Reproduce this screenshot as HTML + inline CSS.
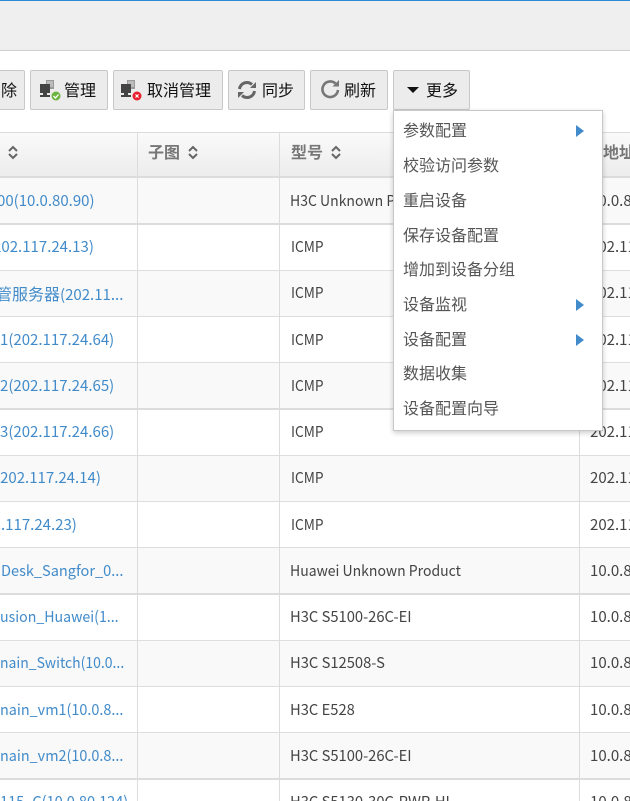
<!DOCTYPE html>
<html lang="zh"><head><meta charset="utf-8"><title>设备</title>
<style>
html,body{margin:0;padding:0;width:630px;height:801px;overflow:hidden;background:#fff}
body{font-family:"WenQuanYi Zen Hei","Noto Sans CJK SC",sans-serif}
#w{position:relative;width:630px;height:801px;overflow:hidden}
.a{position:absolute}
.btn{position:absolute;top:70px;height:40px;box-sizing:border-box;background:#ececec;border:1px solid #c8c8c8;border-radius:2px;color:#111;font:16px/37px "Noto Sans CJK SC",sans-serif;white-space:nowrap}
.btn span{position:absolute;top:0}
.row{position:absolute;left:0;width:630px;overflow:hidden}
.t{position:absolute;font-size:15px;line-height:20px;white-space:nowrap;color:#444;margin-top:1px;transform-origin:0 0}
.l{color:#428bca}
.v{position:absolute;width:1px;background:#dcdcdc}
.th{position:absolute;font:bold 16px/22px "Noto Sans CJK SC",sans-serif;color:#777;white-space:nowrap}
.m{position:absolute;left:403px;font:16px/20px "Noto Sans CJK SC",sans-serif;color:#555;white-space:nowrap;margin-top:-2px}
.ar{position:absolute;left:576px;width:0;height:0;border-left:8px solid #428bca;border-top:6px solid transparent;border-bottom:6px solid transparent}
.i{transform:scaleX(.914)}
.h{transform:scaleX(.982)}
</style></head><body><div id="w">
<div class="a" style="left:0;top:0;width:630px;height:1px;background:#2f8ad6"></div>
<div class="a" style="left:0;top:1px;width:630px;height:49px;background:#efefef;border-bottom:1px solid #cfcfcf"></div>

<div class="btn" style="left:-20px;width:45px"><span style="left:20px">除</span></div>
<div class="btn" style="left:30px;width:78px">
<svg class="a" style="left:9px;top:8px" width="22" height="22" viewBox="0 0 22 22"><path d="M6 1h8v9H6z" fill="#999"/><path d="M7 2h6v6H7z" fill="#bbb"/><path d="M0 5h10v9H0z" fill="#444"/><path d="M3 14h4v2h3v2H0v-2h3z" fill="#444"/><circle cx="16" cy="17" r="4.500" fill="#6db33f"/><path d="M13.500 17l2 2 3-3.500" stroke="#fff" stroke-width="1.300" fill="none"/></svg>
<span style="left:33px">管理</span></div>
<div class="btn" style="left:113px;width:110px">
<svg class="a" style="left:7px;top:8px" width="22" height="22" viewBox="0 0 22 22"><path d="M6 1h8v9H6z" fill="#999"/><path d="M7 2h6v6H7z" fill="#bbb"/><path d="M0 5h10v9H0z" fill="#444"/><path d="M3 14h4v2h3v2H0v-2h3z" fill="#444"/><circle cx="16" cy="17" r="4.500" fill="#e8202e"/><path d="M14.500 15.500l3 3m0-3l-3 3" stroke="#fff" stroke-width="1.200"/></svg>
<span style="left:33px">取消管理</span></div>
<div class="btn" style="left:228px;width:77px">
<svg class="a" style="left:8px;top:9px" width="20" height="20" viewBox="0 0 20 20"><path d="M2.500 9A7.500 7.500 0 0 1 15 4.500" fill="none" stroke="#666" stroke-width="3"/><path d="M17.500 11A7.500 7.500 0 0 1 5 15.500" fill="none" stroke="#666" stroke-width="3"/><path d="M13 8h6V2z" fill="#666"/><path d="M7 12H1v6z" fill="#666"/></svg>
<span style="left:33px">同步</span></div>
<div class="btn" style="left:310px;width:78px">
<svg class="a" style="left:9px;top:8px" width="20" height="20" viewBox="0 0 20 20"><path d="M15.500 4.500A7.800 7.800 0 1 0 18 11" fill="none" stroke="#777" stroke-width="2.600"/><path d="M12.500 7.500H19V1z" fill="#777"/></svg>
<span style="left:33px">刷新</span></div>
<div class="btn" style="left:393px;width:77px">
<div class="a" style="left:13px;top:16px;width:0;height:0;border-top:6px solid #111;border-left:6px solid transparent;border-right:6px solid transparent"></div>
<span style="left:32px">更多</span></div>

<!-- header -->
<div class="a" style="left:0;top:132px;width:630px;height:45px;background:linear-gradient(#fafafa,#ececec);border-top:1px solid #dcdcdc;box-sizing:border-box"></div>
<div class="th" style="left:148px;top:140px">子图</div>
<div class="th" style="left:291px;top:140px">型号</div>
<div class="th" style="left:603px;top:140px">地址</div>
<svg class="a" style="left:7px;top:145px" width="12" height="15" viewBox="0 0 12 15"><path d="M2 6l4-4 4 4M2 9l4 4 4-4" fill="none" stroke="#666" stroke-width="2"/></svg>
<svg class="a" style="left:187px;top:145px" width="12" height="15" viewBox="0 0 12 15"><path d="M2 6l4-4 4 4M2 9l4 4 4-4" fill="none" stroke="#666" stroke-width="2"/></svg>
<svg class="a" style="left:330px;top:145px" width="12" height="15" viewBox="0 0 12 15"><path d="M2 6l4-4 4 4M2 9l4 4 4-4" fill="none" stroke="#666" stroke-width="2"/></svg>

<!-- row backgrounds -->
<div class="a" style="left:0;top:176px;width:630px;height:2px;background:#dcdcdc"></div>
<div class="row" style="top:178px;height:45px;background:#f9f9f9;border-bottom:2px solid #dcdcdc"></div>
<div class="row" style="top:225px;height:45px;border-bottom:1px solid #dedede"></div>
<div class="row" style="top:271px;height:45px;background:#f9f9f9;border-bottom:1px solid #dedede"></div>
<div class="row" style="top:317px;height:45px;border-bottom:1px solid #dedede"></div>
<div class="row" style="top:363px;height:45px;background:#f9f9f9;border-bottom:2px solid #dcdcdc"></div>
<div class="row" style="top:410px;height:45px;border-bottom:1px solid #dedede"></div>
<div class="row" style="top:456px;height:45px;background:#f9f9f9;border-bottom:1px solid #dedede"></div>
<div class="row" style="top:502px;height:45px;border-bottom:1px solid #dedede"></div>
<div class="row" style="top:548px;height:45px;background:#f9f9f9;border-bottom:2px solid #dcdcdc"></div>
<div class="row" style="top:595px;height:45px;border-bottom:1px solid #dedede"></div>
<div class="row" style="top:641px;height:45px;background:#f9f9f9;border-bottom:1px solid #dedede"></div>
<div class="row" style="top:687px;height:45px;border-bottom:1px solid #dedede"></div>
<div class="row" style="top:733px;height:45px;background:#f9f9f9;border-bottom:2px solid #dcdcdc"></div>

<div class="v" style="left:137px;top:132px;height:669px"></div>
<div class="v" style="left:279px;top:132px;height:669px"></div>
<div class="v" style="left:579px;top:132px;height:669px"></div>

<!-- link col -->
<div class="t l" style="left:-3px;top:190px">00(10.0.80.90)</div>
<div class="t l" style="left:-12px;top:236px">(202.117.24.13)</div>
<div class="t l" style="left:-4px;top:282px"><span style="font:16px/20px 'Noto Sans CJK SC',sans-serif">管服务器</span>(202.11...</div>
<div class="t l" style="left:0;top:329px">1(202.117.24.64)</div>
<div class="t l" style="left:0;top:375px">2(202.117.24.65)</div>
<div class="t l" style="left:0;top:421px">3(202.117.24.66)</div>
<div class="t l" style="left:-5px;top:467px">(202.117.24.14)</div>
<div class="t l" style="left:1px;top:514px">.117.24.23)</div>
<div class="t l" style="left:1px;top:560px;transform:scaleX(.97)">Desk_Sangfor_0...</div>
<div class="t l" style="left:0;top:606px;transform:scaleX(.944)">usion_Huawei(1...</div>
<div class="t l" style="left:0;top:652px;transform:scaleX(.932)">nain_Switch(10.0...</div>
<div class="t l" style="left:0;top:699px;transform:scaleX(.96)">nain_vm1(10.0.8...</div>
<div class="t l" style="left:0;top:745px;transform:scaleX(.96)">nain_vm2(10.0.8...</div>
<div class="t l" style="left:0;top:791px;transform:scaleX(.97)">115_C(10.0.80.124)</div>

<!-- model col -->
<div class="t" style="left:290px;top:190px;transform:scaleX(.934)">H3C Unknown Product</div>
<div class="t i" style="left:291px;top:236px">ICMP</div>
<div class="t i" style="left:291px;top:282px">ICMP</div>
<div class="t i" style="left:291px;top:329px">ICMP</div>
<div class="t i" style="left:291px;top:375px">ICMP</div>
<div class="t i" style="left:291px;top:421px">ICMP</div>
<div class="t i" style="left:291px;top:467px">ICMP</div>
<div class="t i" style="left:291px;top:514px">ICMP</div>
<div class="t" style="left:290px;top:560px;transform:scaleX(.934)">Huawei Unknown Product</div>
<div class="t h" style="left:290px;top:606px">H3C S5100-26C-EI</div>
<div class="t h" style="left:290px;top:652px">H3C S12508-S</div>
<div class="t h" style="left:290px;top:699px">H3C E528</div>
<div class="t h" style="left:290px;top:745px">H3C S5100-26C-EI</div>
<div class="t h" style="left:290px;top:791px">H3C S5130-30C-PWR-HI</div>

<!-- ip col -->
<div class="t" style="left:590px;top:190px">10.0.80.90</div>
<div class="t" style="left:590px;top:236px">202.117.24.13</div>
<div class="t" style="left:590px;top:282px">202.117.24.12</div>
<div class="t" style="left:590px;top:329px">202.117.24.64</div>
<div class="t" style="left:590px;top:375px">202.117.24.65</div>
<div class="t" style="left:590px;top:421px">202.117.24.66</div>
<div class="t" style="left:590px;top:467px">202.117.24.14</div>
<div class="t" style="left:590px;top:514px">202.117.24.23</div>
<div class="t" style="left:590px;top:560px">10.0.80.11</div>
<div class="t" style="left:590px;top:606px">10.0.80.12</div>
<div class="t" style="left:590px;top:652px">10.0.80.13</div>
<div class="t" style="left:590px;top:699px">10.0.80.14</div>
<div class="t" style="left:590px;top:745px">10.0.80.15</div>
<div class="t" style="left:590px;top:791px">10.0.80.124</div>

<!-- dropdown -->
<div class="a" style="left:393px;top:110px;width:210px;height:321px;box-sizing:border-box;background:#fff;border:1px solid #c8c8c8;box-shadow:0 2px 5px rgba(0,0,0,.2)"></div>
<div class="m" style="top:121px">参数配置</div><div class="ar" style="top:125px"></div>
<div class="m" style="top:156px">校验访问参数</div>
<div class="m" style="top:191px">重启设备</div>
<div class="m" style="top:226px">保存设备配置</div>
<div class="m" style="top:260px">增加到设备分组</div>
<div class="m" style="top:295px">设备监视</div><div class="ar" style="top:299px"></div>
<div class="m" style="top:330px">设备配置</div><div class="ar" style="top:334px"></div>
<div class="m" style="top:364px">数据收集</div>
<div class="m" style="top:399px">设备配置向导</div>
</div></body></html>
